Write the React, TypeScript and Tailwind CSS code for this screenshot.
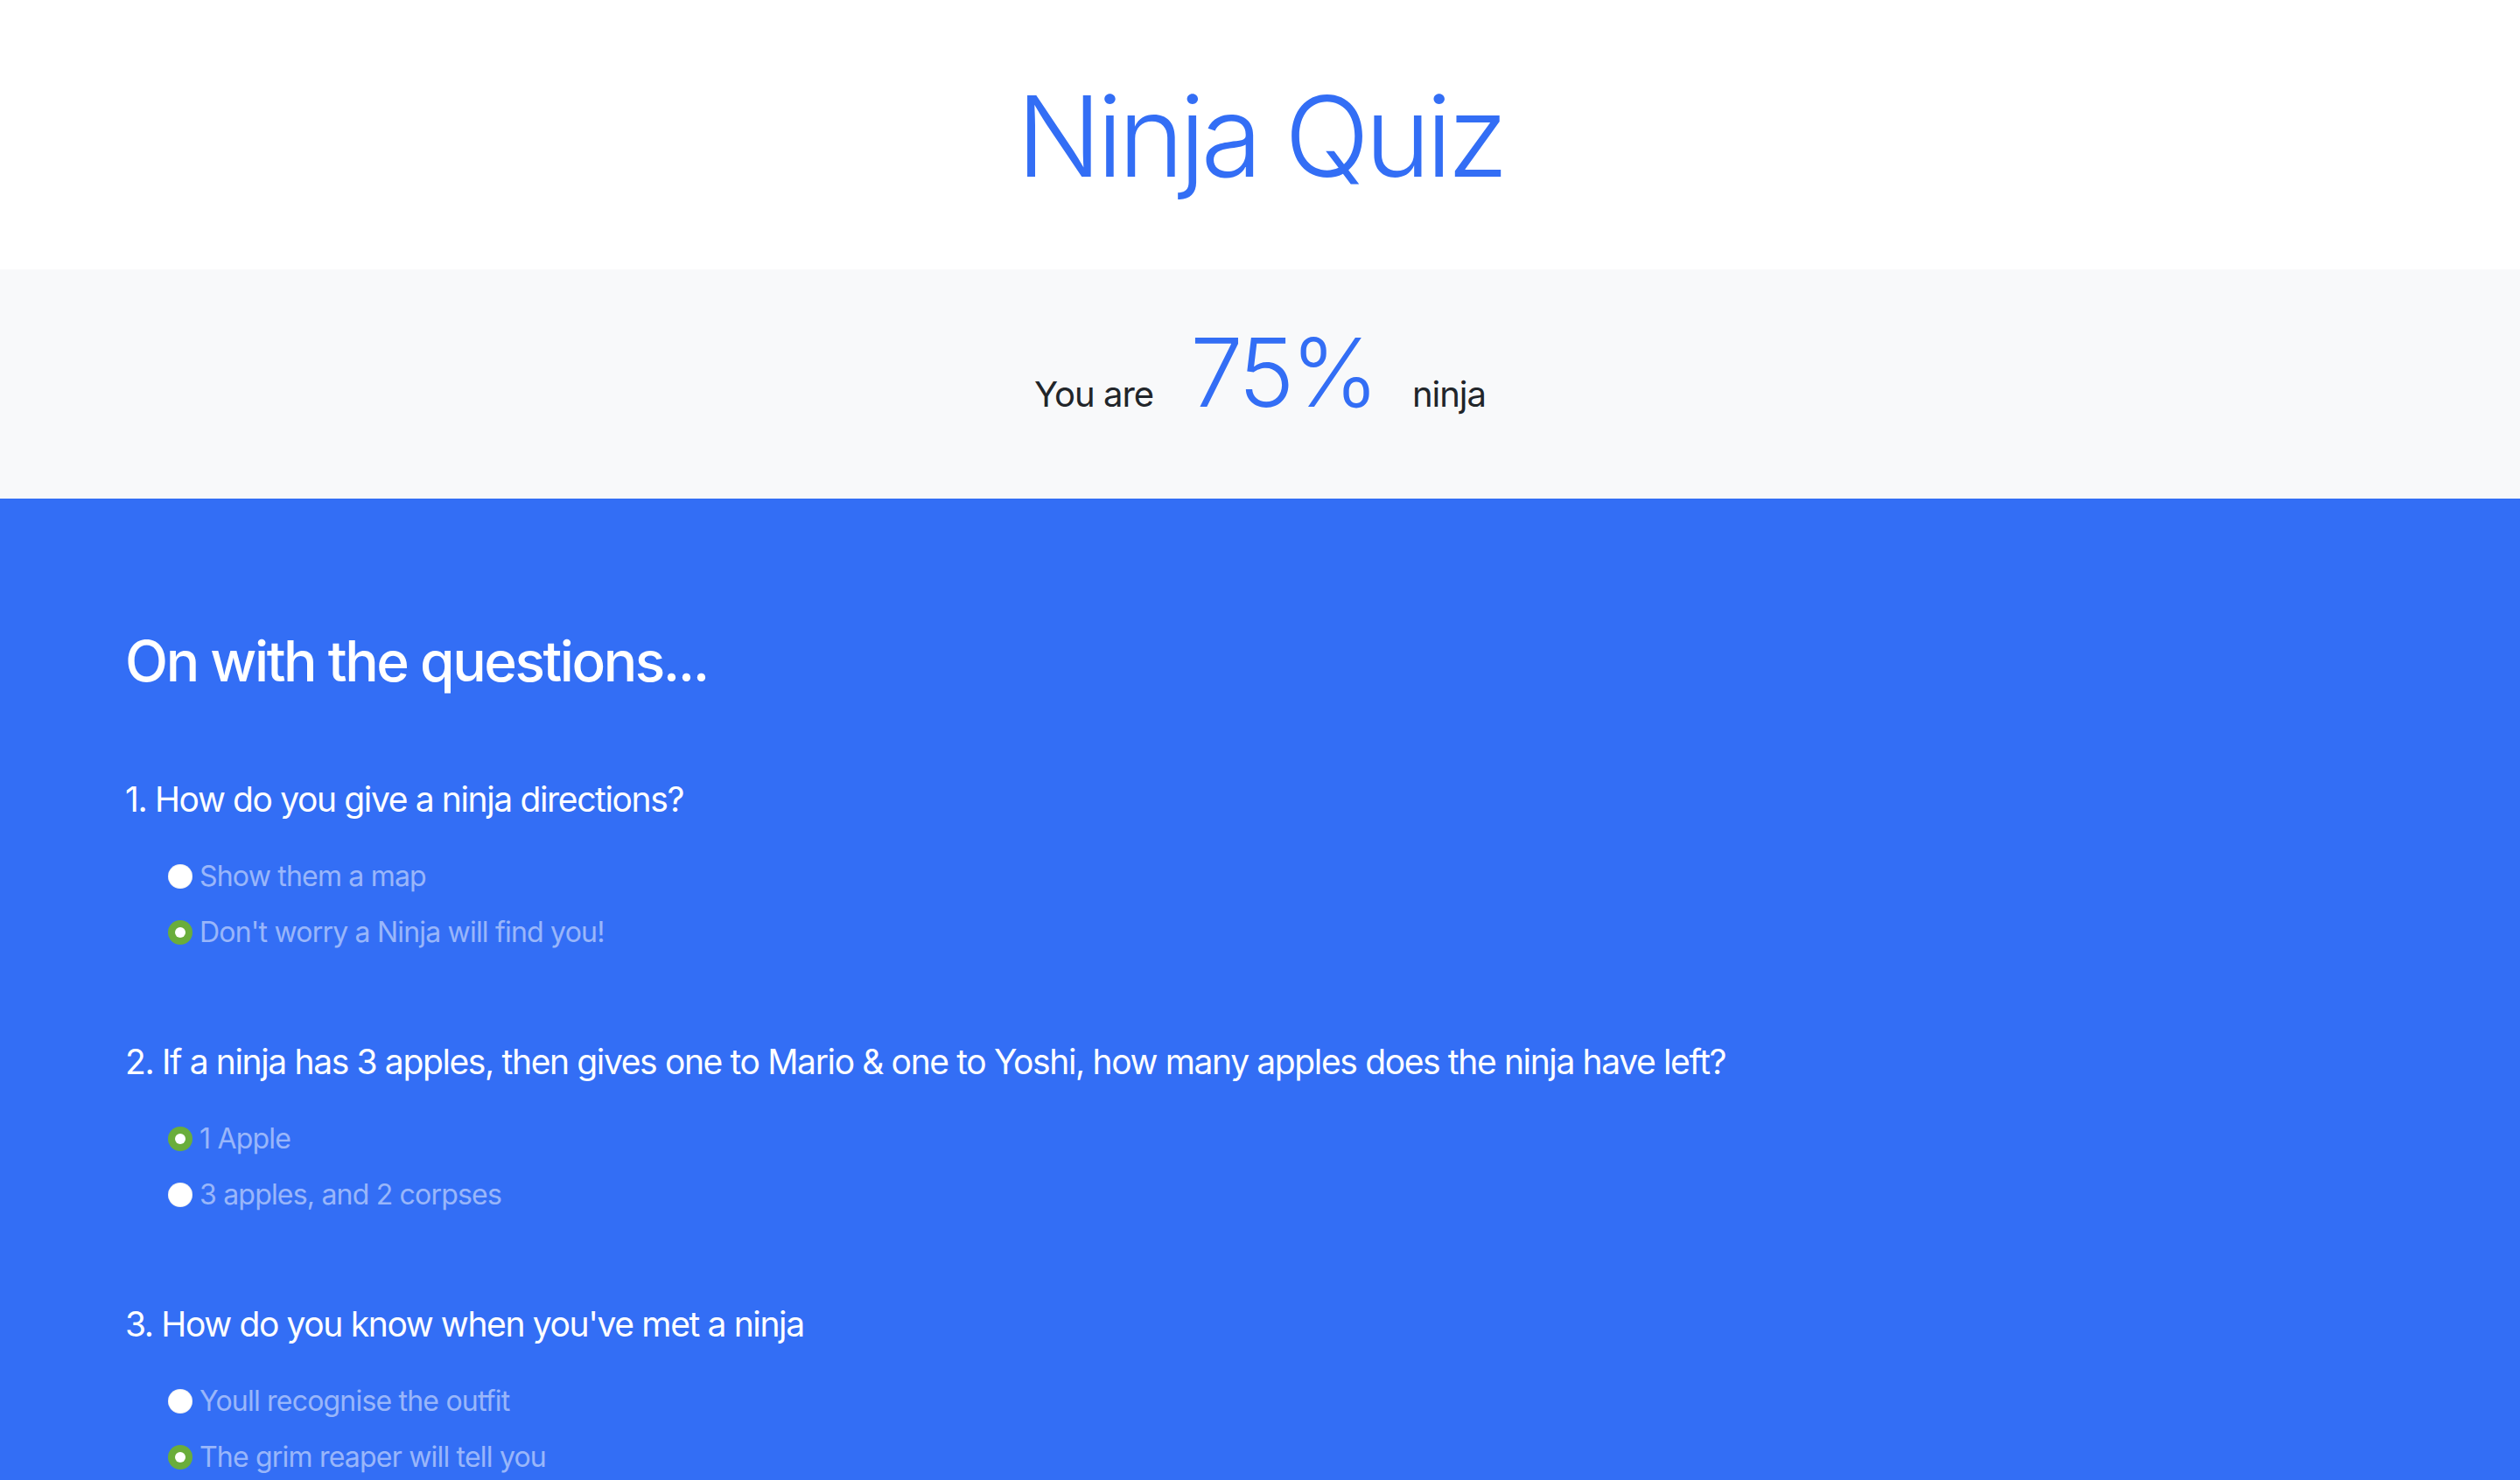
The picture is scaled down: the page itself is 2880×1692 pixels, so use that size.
const questions = [
  {
    title: "1. How do you give a ninja directions?",
    options: ["Show them a map", "Don't worry a Ninja will find you!"],
    picked: 1,
  },
  {
    title:
      "2. If a ninja has 3 apples, then gives one to Mario & one to Yoshi, how many apples does the ninja have left?",
    options: ["1 Apple", "3 apples, and 2 corpses"],
    picked: 0,
  },
  {
    title: "3. How do you know when you've met a ninja",
    options: ["Youll recognise the outfit", "The grim reaper will tell you"],
    picked: 1,
  },
  {
    title: "4. What's a ninja's favourite array method?",
    options: ["forEach()", "slice()"],
    picked: 1,
  },
];

function Radio({ checked }: { checked: boolean }) {
  if (checked) {
    return (
      <span className="flex h-[28px] w-[28px] shrink-0 items-center justify-center rounded-full bg-[#6aad3b]">
        <span className="h-[12px] w-[12px] rounded-full bg-white" />
      </span>
    );
  }
  return <span className="h-[28px] w-[28px] shrink-0 rounded-full bg-white shadow-[inset_0_0_0_1px_rgba(0,0,0,0.06)]" />;
}

export default function App() {
  return (
    <div className="min-h-screen font-['Inter',sans-serif] text-[#212529]">
      {/* intro */}
      <header className="h-[308px] bg-white pt-[92px] text-center">
        <h1 className="text-[128px] font-light leading-none tracking-[-0.042em] text-[#336ef5]">Ninja Quiz</h1>
      </header>

      {/* result */}
      <div className="flex h-[262px] items-start justify-center bg-[#f8f9fa] pt-[64px]">
        <p className="flex items-baseline gap-[10px] text-[40px] tracking-[-0.025em]">
          <span>You are</span>
          <span className="px-[32px] text-[108px] font-light leading-none tracking-[-0.04em] text-[#336ef5]">75%</span>
          <span>ninja</span>
        </p>
      </div>

      {/* quiz */}
      <main className="bg-[#336ef5] pb-[120px] pl-[143px] pt-[147px]">
        <h2 className="text-[64px] font-medium leading-[77px] tracking-[-0.038em] text-white">On with the questions...</h2>
        <form className="mt-[90px] flex flex-col">
          {questions.map((q) => (
            <div key={q.title} className="mb-[94px]">
              <p className="text-[39px] leading-[60px] tracking-[-0.035em] text-white">{q.title}</p>
              <div className="mt-[34px] flex flex-col gap-[16px]">
                {q.options.map((opt, i) => (
                  <label
                    key={opt}
                    className="flex items-center gap-[8px] pl-[49px] text-[32px] leading-[48px] tracking-[-0.025em] text-white/50"
                  >
                    <Radio checked={i === q.picked} />
                    {opt}
                  </label>
                ))}
              </div>
            </div>
          ))}
        </form>
      </main>
    </div>
  );
}
